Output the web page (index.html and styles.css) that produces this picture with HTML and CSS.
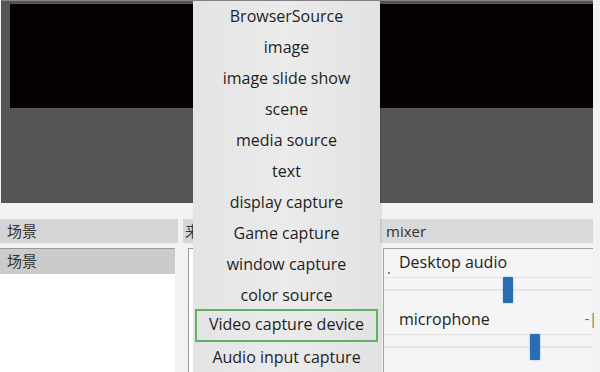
FILE: index.html
```html
<!DOCTYPE html>
<html lang="zh">
<head>
  <meta charset="UTF-8" />
  <title>Add source</title>
  <link rel="stylesheet" href="styles.css">
</head>
<body>
  <div class="window">
    <!-- preview area -->
    <div class="stage">
      <div class="preview"></div>
    </div>

    <!-- docks -->
    <div class="docks">
      <div class="dock scenes">
        <div class="dock-title">场景</div>
        <div class="list">
          <div class="list-item selected">场景</div>
        </div>
      </div>
      <div class="dock sources">
        <div class="dock-title">来源</div>
        <div class="list"></div>
      </div>
      <div class="dock mixer">
        <div class="dock-title">mixer</div>
        <div class="mixer-body">
          <div class="channel">
            <div class="channel-name"><span class="tick dot"></span>Desktop audio</div>
            <div class="track"><span class="handle" style="left: 119px"></span></div>
          </div>
          <div class="channel">
            <div class="channel-name"><span class="tick dash"></span>microphone<span class="end">-|</span></div>
            <div class="track"><span class="handle" style="left: 146px"></span></div>
          </div>
        </div>
      </div>
    </div>

    <!-- add source popup -->
    <ul class="menu">
      <li>BrowserSource</li>
      <li>image</li>
      <li>image slide show</li>
      <li>scene</li>
      <li>media source</li>
      <li>text</li>
      <li>display capture</li>
      <li>Game capture</li>
      <li>window capture</li>
      <li>color source</li>
      <li class="active">Video capture device</li>
      <li>Audio input capture</li>
    </ul>
  </div>
</body>
</html>
```

FILE: styles.css
```css
body {
  margin: 0;
  background: #f2f2f2;
  font-family: "Open Sans", "Noto Sans CJK SC", sans-serif;
  color: #222;
}
.window {
  position: relative;
  width: 600px;
  height: 372px;
  overflow: hidden;
}
.stage {
  width: 592px;
  height: 199px;
  margin-left: 1px;
  padding-top: 3px;
  background: #555;
  border-top: 1px solid #888;
}
.preview {
  margin-left: 9px;
  height: 104px;
  background: #060103;
}
.docks {
  display: flex;
  gap: 5px;
  padding-top: 16px;
}
.dock {
  display: flex;
  flex-direction: column;
  gap: 5px;
}
.dock-title {
  height: 24px;
  line-height: 24px;
  padding-left: 7px;
  background: #d5d5d5;
  font-size: 15px;
  color: #333;
  overflow: hidden;
  white-space: nowrap;
}
.scenes {
  width: 178px;
}
.scenes .list {
  width: 175px;
}
.list {
  height: 130px;
  background: #fff;
  border-top: 1px solid #9a9a9a;
}
.list-item {
  height: 25px;
  line-height: 25px;
  padding-left: 7px;
  font-size: 15px;
  color: #333;
}
.selected {
  background: #cbcbcb;
}
.sources {
  width: 192px;
}
.sources .dock-title {
  padding-left: 2px;
}
.sources .list {
  margin-left: 5px;
  border-left: 1px solid #9a9a9a;
}
.mixer {
  width: 213px;
}
.mixer .dock-title {
  padding-left: 6px;
  background: #d9d9d9;
}
.mixer-body {
  height: 130px;
  margin-left: 3px;
  background: #f5f5f5;
  border-top: 1px solid #a0a0a0;
  border-left: 1px solid #a0a0a0;
}
.channel {
  height: 57px;
}
.channel-name {
  position: relative;
  height: 28px;
  line-height: 26px;
  padding-left: 15px;
  font-size: 16px;
  color: #222;
}
.tick {
  position: absolute;
  background: #888;
}
.dot {
  left: 4px;
  top: 23px;
  width: 2px;
  height: 2px;
}
.dash {
  left: 4px;
  top: 29px;
  width: 9px;
  height: 2px;
}
.end {
  position: absolute;
  right: -4px;
  color: #666;
  font-size: 14px;
}
.track {
  position: relative;
  height: 26px;
  border-top: 1px solid #e2e2e2;
  background: linear-gradient(#f5f5f5 11px, #e6e6e6 11px, #e6e6e6 13px, #f5f5f5 13px);
}
.handle {
  position: absolute;
  top: -1px;
  width: 10px;
  height: 26px;
  background: #2a6db5;
  border-radius: 1px;
  box-shadow: 0 0 2px #8fb6e0;
}
.menu {
  position: absolute;
  top: 1px;
  left: 193px;
  width: 187px;
  margin: 0;
  padding: 0;
  list-style: none;
  background: linear-gradient(90deg, #e4e4e4, #ebebeb 50%, #e2e2e2);
  box-shadow: 1px 0 2px rgba(0,0,0,0.15);
}
.menu li {
  height: 31px;
  line-height: 31px;
  text-align: center;
  font-size: 16px;
  color: #1e1e1e;
  box-sizing: border-box;
}
.menu .active {
  margin: -2px 2px 0 2px;
  border: 2px solid #5fb35f;
  line-height: 27px;
  height: 33px;
}
```
